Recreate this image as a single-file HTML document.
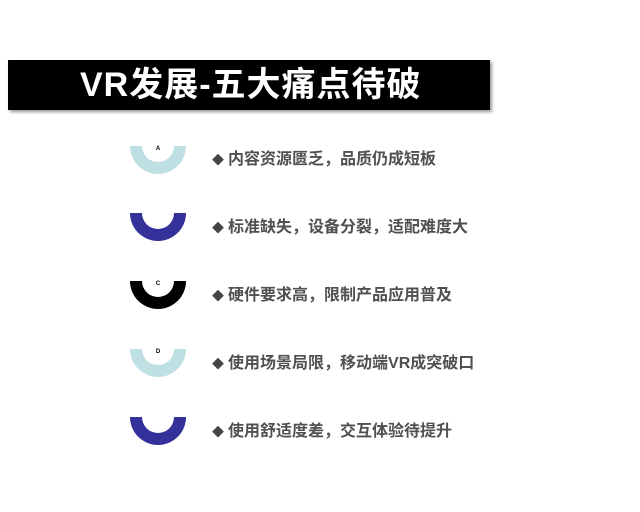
<!DOCTYPE html>
<html><head><meta charset="utf-8"><style>
body{margin:0;width:640px;height:512px;background:#fff;position:relative;overflow:hidden;font-family:"Liberation Sans","Noto Sans CJK SC",sans-serif}
.bar{position:absolute;left:8px;top:60px;width:482px;height:50px;background:#000;box-shadow:2px 2px 3px #999}
.bar span{position:absolute;left:72px;top:3px;color:#fff;font-size:34px;font-weight:bold;line-height:44px;letter-spacing:1px}
.ring{position:absolute;left:130px;width:56px;height:28px}
.lt{position:absolute;left:154px;width:8px;text-align:center;font-size:6px;font-weight:bold;color:#000}
.tx{position:absolute;left:212px;font-size:16px;font-weight:bold;color:#505050;line-height:20px;white-space:nowrap}
.tx b{font-size:12px;color:#444;margin-right:4px}
</style></head><body>
<div class="bar"><span>VR发展-五大痛点待破</span></div>

<svg class="ring" style="top:146px" viewBox="0 0 56 28"><path d="M0 0 A28 28 0 0 0 56 0 L44 0 A16 16 0 0 1 12 0Z" fill="#bfe0e2"/></svg>
<div class="lt" style="top:146px">A</div>
<div class="tx" style="top:150px"><b>◆</b>内容资源匮乏，品质仍成短板</div>

<svg class="ring" style="top:213px" viewBox="0 0 56 28"><path d="M0 0 A28 28 0 0 0 56 0 L44 0 A16 16 0 0 1 12 0Z" fill="#34319a"/></svg>
<div class="lt" style="top:213px;color:#fff">B</div>
<div class="tx" style="top:218px"><b>◆</b>标准缺失，设备分裂，适配难度大</div>

<svg class="ring" style="top:281px" viewBox="0 0 56 28"><path d="M0 0 A28 28 0 0 0 56 0 L44 0 A16 16 0 0 1 12 0Z" fill="#000"/></svg>
<div class="lt" style="top:281px">C</div>
<div class="tx" style="top:286px"><b>◆</b>硬件要求高，限制产品应用普及</div>

<svg class="ring" style="top:349px" viewBox="0 0 56 28"><path d="M0 0 A28 28 0 0 0 56 0 L44 0 A16 16 0 0 1 12 0Z" fill="#bfe0e2"/></svg>
<div class="lt" style="top:349px">D</div>
<div class="tx" style="top:354px"><b>◆</b>使用场景局限，移动端VR成突破口</div>

<svg class="ring" style="top:417px" viewBox="0 0 56 28"><path d="M0 0 A28 28 0 0 0 56 0 L44 0 A16 16 0 0 1 12 0Z" fill="#34319a"/></svg>
<div class="lt" style="top:417px;color:#fff">E</div>
<div class="tx" style="top:422px"><b>◆</b>使用舒适度差，交互体验待提升</div>
</body></html>
